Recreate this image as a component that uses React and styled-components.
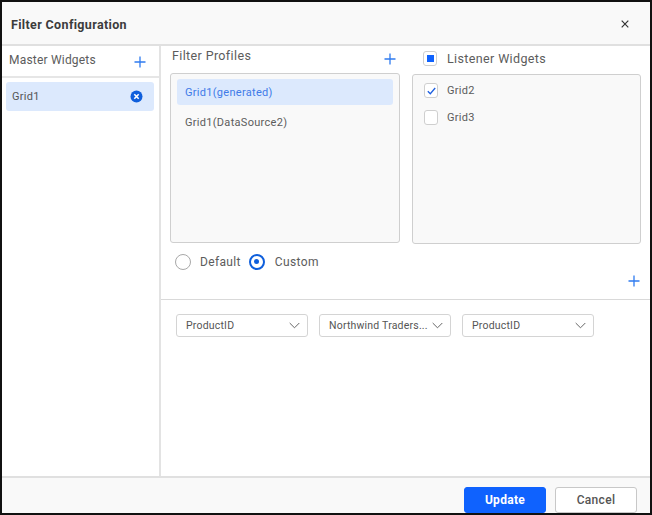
import React from "react";
import styled, { createGlobalStyle } from "styled-components";

const GlobalStyle = createGlobalStyle`
  html, body {
    margin: 0;
    padding: 0;
    background: #fff;
  }
  * {
    box-sizing: border-box;
  }
`;

const Dialog = styled.div`
  width: 652px;
  height: 515px;
  display: flex;
  flex-direction: column;
  background: #fff;
  border: 2px solid #111;
  font-family: Roboto, "Liberation Sans", sans-serif;
  color: #555;
  overflow: hidden;
`;

const Header = styled.div`
  height: 44px;
  flex: none;
  display: flex;
  align-items: center;
  justify-content: space-between;
  padding: 2px 21px 0 9px;
  background: #f9f9f9;
  border-bottom: 2px solid #e0e0e0;
`;

const Title = styled.div`
  font-size: 12.5px;
  font-weight: 700;
  letter-spacing: 0.35px;
  color: #3c3c3c;
`;

const Body = styled.div`
  flex: 1;
  min-height: 0;
  display: flex;
`;

const Sidebar = styled.div`
  width: 159px;
  flex: none;
  border-right: 2px solid #e3e3e3;
`;

const SidebarHead = styled.div`
  height: 32px;
  display: flex;
  align-items: flex-start;
  justify-content: space-between;
  padding: 7px 13px 0 7px;
  border-bottom: 2px solid #e6e6e6;
`;

const Heading = styled.div`
  font-size: 12.5px;
  line-height: 15px;
  letter-spacing: 0.37px;
  color: #5c5c5c;
`;

const MasterHeading = styled(Heading)`
  font-size: 12px;
  letter-spacing: 0.2px;
`;

const PlusSlot = styled.span`
  display: flex;
  margin-top: ${(p) => p.$top}px;
`;

const MasterItem = styled.div`
  height: 29px;
  margin: 4px 5px 0 4px;
  padding: 0 11px 0 6px;
  display: flex;
  align-items: center;
  justify-content: space-between;
  background: #dce9fd;
  border-radius: 3px;
  font-size: 11px;
  letter-spacing: 0.3px;
  color: #555;
`;

const Main = styled.div`
  flex: 1;
  min-width: 0;
  display: flex;
  flex-direction: column;
`;

const Lists = styled.div`
  display: grid;
  grid-template-columns: 230px 229px;
  column-gap: 12px;
  padding: 0 0 0 9px;
`;

const Column = styled.div`
  display: flex;
  flex-direction: column;
`;

const ProfileHead = styled.div`
  height: 27px;
  padding: 2px 4px 0 2px;
  display: flex;
  align-items: flex-start;
  justify-content: space-between;
`;

const ListenerHead = styled.div`
  height: 28px;
  padding: 5px 0 0 11px;
  display: flex;
  align-items: flex-start;
  gap: 10px;
`;

const ListBox = styled.div`
  height: 170px;
  padding: 5px 6px 0;
  background: #f9f9f9;
  border: 1px solid #cfcfcf;
  border-radius: 3px;
`;

const Profile = styled.div`
  height: 26px;
  margin-bottom: 4px;
  padding: 0 8px;
  display: flex;
  align-items: center;
  font-size: 11px;
  letter-spacing: 0.3px;
  color: ${(p) => (p.$selected ? "#3f7be8" : "#5c5c5c")};
  background: ${(p) => (p.$selected ? "#dce9fd" : "transparent")};
  border-radius: 3px;
`;

const ListenerBox = styled(ListBox)`
  padding: 2px 0 0 11px;
`;

const ListenerRow = styled.div`
  height: 27px;
  display: flex;
  align-items: center;
  gap: 9px;
  font-size: 11px;
  letter-spacing: 0.3px;
  color: #5c5c5c;
`;

const Check = styled.span`
  width: 14px;
  height: 15px;
  flex: none;
  display: flex;
  align-items: center;
  justify-content: center;
  background: #fff;
  border: 1px solid #cfcfcf;
  border-radius: 3px;
`;

const CheckSquare = styled.span`
  width: 7px;
  height: 7px;
  background: #0f62fe;
`;

const RadioRow = styled.div`
  height: 28px;
  padding: 7px 0 0 14px;
  display: flex;
  align-items: center;
  font-size: 12px;
  letter-spacing: 0.35px;
  color: #5c5c5c;
`;

const Radio = styled.span`
  width: 16px;
  height: 16px;
  margin-right: ${(p) => (p.$checked ? "10px" : "9px")};
  flex: none;
  display: flex;
  align-items: center;
  justify-content: center;
  background: #fff;
  border-radius: 50%;
  border: ${(p) => (p.$checked ? "2px solid #0f5fdc" : "1px solid #a8a8a8")};
`;

const RadioDot = styled.span`
  width: 5px;
  height: 5px;
  background: #0f5fdc;
  border-radius: 50%;
`;

const RadioLabel = styled.span`
  margin-right: 8px;
`;

const AddRow = styled.div`
  height: 18px;
  padding-right: 10px;
  display: flex;
  justify-content: flex-end;
  align-items: center;
`;

const Mapping = styled.div`
  flex: 1;
  margin-top: 9px;
  padding: 14px 0 0 15px;
  display: flex;
  align-items: flex-start;
  gap: 11px;
  border-top: 1px solid #d9d9d9;
`;

const Select = styled.div`
  width: 132px;
  height: 23px;
  padding: 0 7px 0 9px;
  display: flex;
  align-items: center;
  justify-content: space-between;
  background: #fff;
  border: 1px solid #d4d4d4;
  border-radius: 3px;
  font-size: 10.5px;
  letter-spacing: 0.2px;
  color: #555;
  white-space: nowrap;
`;

const Footer = styled.div`
  height: 37px;
  flex: none;
  display: flex;
  align-items: flex-end;
  justify-content: flex-end;
  gap: 9px;
  padding: 0 13px 0 0;
  background: #f9f9f9;
  border-top: 2px solid #e0e0e0;
`;

const Button = styled.button`
  width: 82px;
  height: 26px;
  padding: 0;
  font-family: inherit;
  font-size: 12px;
  font-weight: ${(p) => (p.$primary ? 700 : 500)};
  letter-spacing: 0.3px;
  color: ${(p) => (p.$primary ? "#fff" : "#555")};
  background: ${(p) => (p.$primary ? "#0f62fe" : "#fff")};
  border: 1px solid ${(p) => (p.$primary ? "#0f62fe" : "#c8c8c8")};
  border-radius: 3px;
`;

const Plus = () => (
  <svg width="12" height="12" viewBox="0 0 12 12" fill="none">
    <path d="M6 0.5v11M0.5 6h11" stroke="#2f7bf0" strokeWidth="1.3" />
  </svg>
);

const Close = () => (
  <svg width="8" height="8" viewBox="0 0 8 8" fill="none">
    <path d="M0.7 0.7l6.6 6.6M7.3 0.7L0.7 7.3" stroke="#333" strokeWidth="1.2" />
  </svg>
);

const RemoveBadge = () => (
  <svg width="13" height="13" viewBox="0 0 13 13">
    <circle cx="6.5" cy="6.5" r="6" fill="#0f5fdc" />
    <path d="M4.3 4.3l4.4 4.4M8.7 4.3L4.3 8.7" stroke="#fff" strokeWidth="1.6" />
  </svg>
);

const Tick = () => (
  <svg width="9" height="8" viewBox="0 0 9 8" fill="none">
    <path d="M0.8 4.2l2.5 2.5L8.2 1" stroke="#1d5fe0" strokeWidth="1.3" />
  </svg>
);

const Chevron = () => (
  <svg width="11" height="7" viewBox="0 0 11 7" fill="none">
    <path d="M0.7 1l4.8 4.8L10.3 1" stroke="#666" strokeWidth="1" />
  </svg>
);

const selects = ["ProductID", "Northwind Traders...", "ProductID"];

export default function App() {
  return (
    <>
      <GlobalStyle />
      <Dialog>
        <Header>
          <Title>Filter Configuration</Title>
          <Close />
        </Header>
        <Body>
          <Sidebar>
            <SidebarHead>
              <MasterHeading>Master Widgets</MasterHeading>
              <PlusSlot $top={3}>
                <Plus />
              </PlusSlot>
            </SidebarHead>
            <MasterItem>
              Grid1
              <RemoveBadge />
            </MasterItem>
          </Sidebar>
          <Main>
            <Lists>
              <Column>
                <ProfileHead>
                  <Heading>Filter Profiles</Heading>
                  <PlusSlot $top={5}>
                    <Plus />
                  </PlusSlot>
                </ProfileHead>
                <ListBox>
                  <Profile $selected>Grid1(generated)</Profile>
                  <Profile>Grid1(DataSource2)</Profile>
                </ListBox>
              </Column>
              <Column>
                <ListenerHead>
                  <Check>
                    <CheckSquare />
                  </Check>
                  <Heading>Listener Widgets</Heading>
                </ListenerHead>
                <ListenerBox>
                  <ListenerRow>
                    <Check>
                      <Tick />
                    </Check>
                    Grid2
                  </ListenerRow>
                  <ListenerRow>
                    <Check />
                    Grid3
                  </ListenerRow>
                </ListenerBox>
              </Column>
            </Lists>
            <RadioRow>
              <Radio />
              <RadioLabel>Default</RadioLabel>
              <Radio $checked>
                <RadioDot />
              </Radio>
              <RadioLabel>Custom</RadioLabel>
            </RadioRow>
            <AddRow>
              <Plus />
            </AddRow>
            <Mapping>
              {selects.map((label, i) => (
                <Select key={i}>
                  {label}
                  <Chevron />
                </Select>
              ))}
            </Mapping>
          </Main>
        </Body>
        <Footer>
          <Button $primary>Update</Button>
          <Button>Cancel</Button>
        </Footer>
      </Dialog>
    </>
  );
}
